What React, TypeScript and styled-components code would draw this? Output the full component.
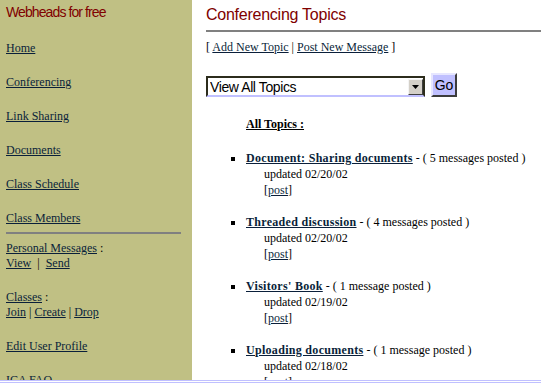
import styled, { createGlobalStyle } from "styled-components";

const GlobalStyle = createGlobalStyle`
  html, body {
    margin: 0;
    padding: 0;
    height: 100%;
    overflow: hidden;
    background: #fff;
  }
  body {
    font-family: "Liberation Serif", "Times New Roman", serif;
    font-size: 12px;
    color: #000;
  }
`;

const Page = styled.div`
  display: flex;
  height: 383px;
`;

const Sidebar = styled.aside`
  width: 192px;
  flex-shrink: 0;
  box-sizing: border-box;
  padding: 4px 11px 0 6px;
  background: #c0c084;
  line-height: 15px;
`;

const SiteTitle = styled.div`
  font-family: "Liberation Sans", Arial, sans-serif;
  font-size: 14px;
  letter-spacing: -0.9px;
  line-height: 16px;
  color: #800000;
  margin-bottom: 21px;
`;

const NavList = styled.nav`
  display: flex;
  flex-direction: column;
  gap: 19px;
`;

const Link = styled.a<{ $bold?: boolean }>`
  color: #0a1f3a;
  text-decoration: underline;
  font-weight: ${(p) => (p.$bold ? "bold" : "normal")};
  letter-spacing: ${(p) => (p.$bold ? "0.3px" : "normal")};
  cursor: pointer;
`;

const NavLink = styled(Link)`
  display: block;
  align-self: flex-start;
`;

const Divider = styled.hr<{ $gapTop: number; $gapBottom: number }>`
  border: none;
  height: 2px;
  background: #808080;
  margin: ${(p) => p.$gapTop}px 0 ${(p) => p.$gapBottom}px;
`;

const Group = styled.div`
  margin-bottom: 19px;

  &:first-of-type {
    margin-bottom: 20px;
  }
`;

const Main = styled.main`
  flex: 1;
  padding: 5px 0 0 14px;
  min-width: 0;
`;

const PageTitle = styled.h1`
  margin: 0 0 6px;
  font-family: "Liberation Sans", Arial, sans-serif;
  font-weight: normal;
  font-size: 16px;
  letter-spacing: -0.25px;
  line-height: 19px;
  color: #800000;
`;

const ActionLine = styled.div`
  line-height: 15px;
`;

const Controls = styled.form`
  display: flex;
  align-items: flex-end;
  gap: 6px;
  margin: 18px 0 19px;
`;

const SelectFrame = styled.div`
  display: flex;
  align-items: center;
  width: 219px;
  height: 21px;
  box-sizing: border-box;
  border: 2px solid #2c2c1c;
  border-bottom-color: #c0c0ff;
  background: #fff;
`;

const Select = styled.select`
  appearance: none;
  flex: 1;
  min-width: 0;
  height: 100%;
  border: none;
  outline: none;
  background: transparent;
  padding: 0 0 0 2px;
  font-family: "Liberation Sans", Arial, sans-serif;
  font-size: 14px;
  letter-spacing: -0.4px;
  color: #000;
`;

const ArrowButton = styled.span`
  display: flex;
  align-items: center;
  justify-content: center;
  width: 15px;
  height: 16px;
  box-sizing: border-box;
  background: #d4d0c8;
  border: 1px solid;
  border-color: #f4f4f4 #404040 #404040 #f4f4f4;
`;

const GoButton = styled.button`
  width: 26px;
  height: 24px;
  padding: 0;
  box-sizing: border-box;
  background: #c0c0ff;
  border: 2px solid;
  border-color: #e6e6ff #3c3c3c #3c3c3c #e6e6ff;
  font-family: "Liberation Sans", Arial, sans-serif;
  font-size: 14px;
  color: #000;
`;

const SectionHeading = styled.div`
  margin-left: 40px;
  line-height: 16px;
  font-weight: bold;
  text-decoration: underline;
`;

const TopicList = styled.ul`
  list-style: none;
  margin: 18px 0 0;
  padding: 0;
  line-height: 16px;
`;

const TopicItem = styled.li`
  display: flex;
  align-items: flex-start;
  margin-bottom: 16px;
`;

const Bullet = styled.span`
  width: 4px;
  height: 4px;
  background: #000;
  margin: 7px 11px 0 25px;
  flex-shrink: 0;
`;

const TopicBody = styled.div`
  display: flex;
  flex-direction: column;
`;

const Detail = styled.div`
  padding-left: 18px;
`;

const BottomEdge = styled.div`
  position: fixed;
  left: 0;
  right: 0;
  bottom: 0;
  height: 1px;
  background: #fff;
  border-top: 1px solid #c0c0ff;
  border-bottom: 1px solid #c0c0ff;
`;

const topics = [
  { title: "Document: Sharing documents", count: "5 messages", updated: "02/20/02" },
  { title: "Threaded discussion", count: "4 messages", updated: "02/20/02" },
  { title: "Visitors' Book", count: "1 message", updated: "02/19/02" },
  { title: "Uploading documents", count: "1 message", updated: "02/18/02" },
];

const navItems = ["Home", "Conferencing", "Link Sharing", "Documents", "Class Schedule", "Class Members"];

const App = () => {
  return (
    <>
      <GlobalStyle />
      <Page>
        <Sidebar>
          <SiteTitle>Webheads for free</SiteTitle>
          <NavList>
            {navItems.map((item) => (
              <NavLink key={item}>{item}</NavLink>
            ))}
          </NavList>
          <Divider $gapTop={6} $gapBottom={7} />
          <Group>
            <Link>Personal Messages</Link> :
            <br />
            <Link>View</Link>&nbsp; |&nbsp; <Link>Send</Link>
          </Group>
          <Group>
            <Link>Classes</Link> :
            <br />
            <Link>Join</Link> | <Link>Create</Link> | <Link>Drop</Link>
          </Group>
          <Group>
            <Link>Edit User Profile</Link>
          </Group>
          <Group>
            <Link>ICA FAQ</Link>
          </Group>
        </Sidebar>

        <Main>
          <PageTitle>Conferencing Topics</PageTitle>
          <Divider $gapTop={0} $gapBottom={8} />
          <ActionLine>
            [ <Link>Add New Topic</Link> | <Link>Post New Message</Link> ]
          </ActionLine>

          <Controls onSubmit={(e) => e.preventDefault()}>
            <SelectFrame>
              <Select defaultValue="all">
                <option value="all">View All Topics</option>
              </Select>
              <ArrowButton>
                <svg width="7" height="4" viewBox="0 0 7 4">
                  <path d="M0 0h7L3.5 4z" fill="#000" />
                </svg>
              </ArrowButton>
            </SelectFrame>
            <GoButton type="submit">Go</GoButton>
          </Controls>

          <SectionHeading>All Topics :</SectionHeading>
          <TopicList>
            {topics.map((t) => (
              <TopicItem key={t.title}>
                <Bullet />
                <TopicBody>
                  <div>
                    <Link $bold>{t.title}</Link> - ( {t.count} posted )
                  </div>
                  <Detail>updated {t.updated}</Detail>
                  <Detail>
                    [<Link>post</Link>]
                  </Detail>
                </TopicBody>
              </TopicItem>
            ))}
          </TopicList>
        </Main>
      </Page>
      <BottomEdge />
    </>
  );
};

export default App;
